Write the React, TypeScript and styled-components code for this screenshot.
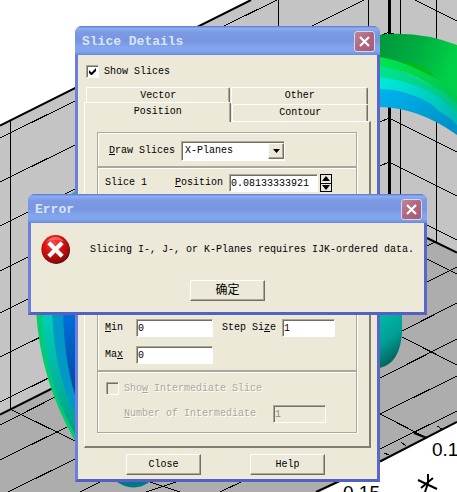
import React from "react";
import styled, { createGlobalStyle, css } from "styled-components";

const face = "#ece9d8";
const shade = "#aca899";
const dark = "#716f64";

const GlobalStyle = createGlobalStyle`
  * { box-sizing: border-box; }
  body {
    margin: 0;
    overflow: hidden;
    background: #fff;
    color: #000;
    font: 10px/12px "Liberation Mono", "Noto Sans CJK SC", monospace;
  }
  button, input, select { font: inherit; color: inherit; margin: 0; border-radius: 0; }
`;

const Desktop = styled.main`
  position: relative;
  min-height: 100vh;
`;

const Plot = styled.svg`
  display: block;
  width: 100vw;
  height: 100vh;
`;

const Window = styled.section<{ $top: number; $left: number; $right: number }>`
  position: absolute;
  top: ${(p) => p.$top}px;
  left: ${(p) => p.$left}px;
  right: ${(p) => p.$right}px;
  border: 3px solid #6d7fdc;
  border-top: 0;
  border-right-color: #5a66c8;
  border-bottom-color: #5560c4;
  border-radius: 7px 7px 0 0;
  background: #7b97e0;
`;

const TitleBar = styled.header`
  display: flex;
  align-items: center;
  justify-content: space-between;
  height: 29px;
  margin: 0 -3px;
  padding: 2px 5px 0 7px;
  border-radius: 7px 7px 0 0;
  background: linear-gradient(#5c78cc 0, #8eacf0 8%, #7c9ae4 22%, #7896e0 50%, #82a6ee 75%, #80a4ec 88%, #6c88d8 100%);
`;

const Title = styled.h1`
  margin: 0;
  color: #d8e4f8;
  font-size: 13px;
  line-height: 16px;
  font-weight: bold;
`;

const CloseBox = styled.button`
  display: grid;
  place-items: center;
  width: 21px;
  height: 21px;
  padding: 0;
  border: 1px solid #d5d4f2;
  border-radius: 3px;
  background: linear-gradient(135deg, #c08498, #b0667a 50%, #a45c78);
`;

const bevel = css`
  border: 1px solid;
  border-color: #fff ${dark} ${dark} #fff;
  box-shadow: inset -1px -1px ${shade};
  background: ${face};
`;

const sunken = css`
  border: 1px solid;
  border-color: ${shade} #fff #fff ${shade};
  box-shadow: inset 1px 1px ${dark};
`;

const PushButton = styled.button<{ $large?: boolean }>`
  ${bevel}
  width: 75px;
  height: 21px;
  padding: 0;
  font-size: ${(p) => (p.$large ? 12 : 10)}px;
  line-height: 16px;
`;

const SliceBody = styled.div`
  padding: 10px 6px 4px;
  background: ${face};
`;

const CheckLabel = styled.label<{ $disabled?: boolean }>`
  display: flex;
  align-items: center;
  gap: 5px;
  height: 13px;
  ${(p) => p.$disabled && css`color: ${shade}; text-shadow: 1px 1px #fff;`}
`;

const TopCheck = styled.div`
  padding-left: 2px;
  margin-bottom: 9px;
`;

const CheckWrap = styled.span`
  display: grid;
  width: 13px;
  height: 13px;
  > * { grid-area: 1 / 1; }
  > svg { place-self: center; pointer-events: none; }
`;

const Check = styled.input`
  ${sunken}
  appearance: none;
  width: 13px;
  height: 13px;
  background: #fff;
  &:disabled { background: ${face}; }
`;

const TabRow = styled.div<{ $front?: boolean }>`
  display: flex;
  align-items: flex-end;
  height: 17px;
  gap: 1px;
  padding: 0 3px 0 ${(p) => (p.$front ? 0 : 2)}px;
`;

const Tab = styled.button<{ $active?: boolean; $first?: boolean }>`
  flex: ${(p) => (p.$active ? "148 1 0" : p.$first ? "144 1 0" : "136 1 0")};
  height: ${(p) => (p.$active ? 20 : 17)}px;
  margin-bottom: ${(p) => (p.$active ? -1 : 0)}px;
  padding: 0 0 ${(p) => (p.$active ? 2 : 0)}px;
  position: relative;
  border: 1px solid;
  border-color: #fff ${dark} transparent #fff;
  border-bottom: 0;
  border-radius: 2px 2px 0 0;
  box-shadow: inset -1px 0 ${shade};
  background: ${face};
  line-height: 14px;
`;

const TabPanel = styled.div`
  padding: 10px 12px 13px;
  border: solid;
  border-width: 1px 2px 2px 1px;
  border-color: #fff #817e70 #817e70 #fff;
`;

const Frame = styled.div`
  border: 1px solid ${shade};
  box-shadow: 1px 1px #fff, inset 1px 1px #fff;
`;

const Section = styled.div<{ $pad: string }>`
  padding: ${(p) => p.$pad};
`;

const Divider = styled.hr`
  height: 3px;
  margin: 0;
  border: 0;
  border-top: 2px solid ${shade};
  background: #fff;
`;

const Row = styled.div<{ $before?: number; $indent?: number; $disabled?: boolean }>`
  display: flex;
  align-items: center;
  height: 18px;
  margin-top: ${(p) => p.$before ?? 0}px;
  padding-left: ${(p) => p.$indent ?? 0}px;
  white-space: nowrap;
  ${(p) => p.$disabled && css`color: ${shade}; text-shadow: 1px 1px #fff;`}
`;

const Caption = styled.label<{ $width: number }>`
  flex: 0 0 ${(p) => p.$width}px;
`;

const Field = styled.input<{ $width: number; $after?: number }>`
  ${sunken}
  width: ${(p) => p.$width}px;
  height: 18px;
  margin-right: ${(p) => p.$after ?? 0}px;
  padding: 0 1px;
  background: #fff;
  &:disabled { background: ${face}; color: #8f8c7e; }
`;

const SelectWrap = styled.span`
  ${sunken}
  display: grid;
  width: 104px;
  height: 20px;
  background: #fff;
  > * { grid-area: 1 / 1; }
`;

const Select = styled.select`
  appearance: none;
  width: 100%;
  padding: 0 18px 0 3px;
  border: 0;
  background: transparent;
`;

const SelectArrow = styled.span`
  ${bevel}
  display: grid;
  place-items: center;
  place-self: center end;
  width: 16px;
  height: 16px;
  pointer-events: none;
`;

const Spinner = styled.span`
  display: grid;
  width: 12px;
  height: 18px;
  border: 1px solid #000;
`;

const SpinButton = styled.button`
  display: grid;
  place-items: center;
  padding: 0;
  border: 0;
  background: ${face};
  & + & { border-top: 1px solid #000; }
`;

const Footer = styled.footer`
  display: flex;
  gap: 49px;
  padding: 6px 0 0 42px;
`;

const ErrorBody = styled.div`
  padding: 10px 10px 11px;
  background: ${face};
`;

const MessageRow = styled.div`
  display: flex;
  align-items: center;
  gap: 20px;
  height: 33px;
  margin-bottom: 14px;
`;

const Message = styled.p`
  margin: 0;
  white-space: nowrap;
`;

const Centered = styled.div`
  display: flex;
  justify-content: center;
`;

const TitleClose = ({ name }: { name: string }) => (
  <CloseBox aria-label={name}>
    <svg width="11" height="11" viewBox="0 0 11 11">
      <path d="M1 1L10 10M10 1L1 10" stroke="#fff" strokeWidth="2.2" />
    </svg>
  </CloseBox>
);

const ErrorIcon = () => (
  <svg width="32" height="33" viewBox="0 0 32 33" aria-hidden="true">
    <defs>
      <radialGradient id="ball" cx="42%" cy="30%" r="70%">
        <stop offset="0" stopColor="#f4504a" />
        <stop offset="0.45" stopColor="#dc1414" />
        <stop offset="1" stopColor="#860808" />
      </radialGradient>
    </defs>
    <circle cx="16.8" cy="17.2" r="15.2" fill="#3a1010" />
    <circle cx="16" cy="16.2" r="15.6" fill="url(#ball)" />
    <path d="M6 8Q16 -3 26 8Q16 4 6 8Z" fill="#ff9a90" opacity="0.5" />
    <path d="M8.6 9L23.4 24M23.4 9L8.6 24" stroke="#fff" strokeWidth="4.6" />
  </svg>
);

const Scene = () => (
  <Plot viewBox="0 0 457 492" preserveAspectRatio="xMinYMin slice" aria-hidden="true">
    <defs>
      <linearGradient id="green" x1="0" y1="0" x2="1" y2="0.3">
        <stop offset="0" stopColor="#00963a" />
        <stop offset="0.5" stopColor="#00ac40" />
        <stop offset="1" stopColor="#00d048" />
      </linearGradient>
      <linearGradient id="lime" x1="0" y1="0" x2="1" y2="0.6">
        <stop offset="0" stopColor="#00e64c" />
        <stop offset="1" stopColor="#00c850" />
      </linearGradient>
      <linearGradient id="mint" x1="0" y1="0" x2="1" y2="0.6">
        <stop offset="0" stopColor="#00e68c" />
        <stop offset="1" stopColor="#00c488" />
      </linearGradient>
      <linearGradient id="cyan" x1="0" y1="0" x2="1" y2="0.7">
        <stop offset="0" stopColor="#00ecdc" />
        <stop offset="1" stopColor="#00bcb4" />
      </linearGradient>
      <linearGradient id="sky" x1="0" y1="0" x2="1" y2="0.7">
        <stop offset="0" stopColor="#00b4ee" />
        <stop offset="1" stopColor="#0092c8" />
      </linearGradient>
      <linearGradient id="teal" x1="0" y1="0" x2="0.3" y2="1">
        <stop offset="0" stopColor="#00bcae" />
        <stop offset="0.55" stopColor="#00a096" />
        <stop offset="1" stopColor="#006058" />
      </linearGradient>
      <linearGradient id="outer" x1="0" y1="0" x2="0" y2="1">
        <stop offset="0" stopColor="#00d0bc" />
        <stop offset="1" stopColor="#00a088" />
      </linearGradient>
      <linearGradient id="blue" x1="0" y1="0" x2="0" y2="1">
        <stop offset="0" stopColor="#0070dc" />
        <stop offset="1" stopColor="#0048a4" />
      </linearGradient>
    </defs>
    <path d="M0 125L251 0H457V252L389 220L0 414Z" fill="#c4c4c4" />
    <path d="M0 414L389 220L457 252V422L320 492H0Z" fill="#adadad" />
    <g stroke="#000" strokeWidth="1" fill="none" shapeRendering="crispEdges">
      <path d="M0 138L75 101M0 182L75 145M0 226L75 189M0 271L75 234M0 313L75 276M0 357L75 320M0 402L75 365" />
      <path d="M10.5 120V409M278.5 0V30M368.5 0V30M400.5 0V220M436.5 0V242" />
      <path d="M224 26L277 0M312 26L364 0M415 0L457 21M380 36L389 32L400 37M380 122L389 118L457 152M380 166L389 162L457 196" />
      <path d="M427 225L457 240M427 246L435 242M427 259L457 274M427 282L457 267M427 318L457 303" />
      <path d="M0 425L75 387M0 460L75 423M8 492L75 459M80 492L100 482M10 409L75 441M150 482L180 492M146 492L176 482M220 492L243 481" />
      <path d="M402 331L457 303M402 337L457 365M380 378L457 339M380 414L457 376M380 414L425 437M380 449L457 411M384 453L389 455M401 442L406 446M437 426L442 429" />
    </g>
    <g stroke="#000" strokeWidth="2" fill="none">
      <path d="M0 125.5L251 0M0 414.5L75 377M427 238L457 252.5M380 461.5L457 422M316 492L344 479M414 433L427 438" />
      <path d="M389.5 0V220" strokeWidth="3" />
    </g>
    <path d="M378 35Q418 30 457 45V97Q418 66 378 57Z" fill="url(#green)" />
    <path d="M378 57Q400 59 437 79Q450 87 457 96V105Q418 70 378 67Z" fill="url(#lime)" />
    <path d="M378 66Q400 68 429 84Q447 93 457 104V115Q418 80 378 78Z" fill="url(#mint)" />
    <path d="M378 77Q406 80 428 91Q447 102 457 114V127Q418 96 378 90Z" fill="url(#cyan)" />
    <path d="M378 89Q406 89 431 104L440 112Q450 117 457 125V135Q418 107 378 107Z" fill="url(#sky)" />
    <path d="M400 60Q422 65 437 78Q420 71 400 60Z" fill="#00c000" />
    <path d="M71 194L75 191V194Z" fill="#00cc90" />
    <path d="M36 310Q40 380 75 441V310Z" fill="#00cc70" />
    <path d="M42 310Q44 380 75 434V310Z" fill="url(#outer)" />
    <path d="M52 310Q54 372 75 415V310Z" fill="#0098c4" />
    <path d="M63 310Q64 360 75 395V310Z" fill="url(#blue)" />
    <path d="M380 310H402V333Q400 363 380 368Z" fill="url(#teal)" />
    <path d="M114 480H152Q134 495 114 480Z" fill="#007888" />
    <g fontFamily="Liberation Sans, Arial, sans-serif" fontSize="19">
      <text x="432" y="456">0.1</text>
      <text x="343" y="499">0.15</text>
    </g>
    <path d="M418 480L437 489M428 474V483L425 492M433 478L421 488" stroke="#000" strokeWidth="2" fill="none" />
  </Plot>
);

const Triangle = ({ up, wide }: { up?: boolean; wide?: boolean }) => (
  <svg width={wide ? 7 : 8} height={wide ? 4 : 5} viewBox="0 0 8 5" preserveAspectRatio="none">
    <path d={up ? "M0 5L4 0L8 5Z" : "M0 0H8L4 5Z"} />
  </svg>
);

export default function App() {
  return (
    <Desktop>
      <GlobalStyle />
      <Scene />
      <Window $top={26} $left={75} $right={77} role="dialog" aria-labelledby="slice-title">
        <TitleBar>
          <Title id="slice-title">Slice Details</Title>
          <TitleClose name="Close Slice Details" />
        </TitleBar>
        <SliceBody>
          <TopCheck>
            <CheckLabel>
              <CheckWrap>
                <Check type="checkbox" defaultChecked />
                <svg width="7" height="7" viewBox="0 0 7 7">
                  <path d="M0 2V5L2 7H3L7 3V0L2.5 4.5Z" />
                </svg>
              </CheckWrap>
              Show Slices
            </CheckLabel>
          </TopCheck>
          <div role="tablist" aria-label="Slice settings">
            <TabRow>
              <Tab role="tab" $first>Vector</Tab>
              <Tab role="tab">Other</Tab>
            </TabRow>
            <TabRow $front>
              <Tab role="tab" aria-selected="true" $active>Position</Tab>
              <Tab role="tab">Contour</Tab>
            </TabRow>
          </div>
          <TabPanel role="tabpanel">
            <Frame>
              <Section $pad="9px 11px 6px">
                <Row>
                  <Caption htmlFor="draw" $width={72}><u>D</u>raw Slices</Caption>
                  <SelectWrap>
                    <Select id="draw" defaultValue="X-Planes">
                      <option>X-Planes</option>
                    </Select>
                    <SelectArrow><Triangle wide /></SelectArrow>
                  </SelectWrap>
                </Row>
              </Section>
              <Divider />
              <Section $pad="5px 7px 6px">
                <Row>
                  <Caption as="span" $width={70}>Slice 1</Caption>
                  <Caption htmlFor="position" $width={54}><u>P</u>osition</Caption>
                  <Field id="position" defaultValue="0.08133333921" $width={89} $after={2} />
                  <Spinner>
                    <SpinButton aria-label="Increase position"><Triangle up /></SpinButton>
                    <SpinButton aria-label="Decrease position"><Triangle /></SpinButton>
                  </Spinner>
                </Row>
                <Row $before={127}>
                  <Caption htmlFor="min" $width={31}><u>M</u>in</Caption>
                  <Field id="min" defaultValue="0" $width={77} $after={9} />
                  <Caption htmlFor="step" $width={60}>Step Si<u>z</u>e</Caption>
                  <Field id="step" defaultValue="1" $width={53} />
                </Row>
                <Row $before={9}>
                  <Caption htmlFor="max" $width={31}>Ma<u>x</u></Caption>
                  <Field id="max" defaultValue="0" $width={77} />
                </Row>
              </Section>
              <Divider />
              <Section $pad="9px 8px 9px">
                <CheckLabel $disabled>
                  <Check type="checkbox" disabled />
                  <span>Sho<u>w</u> Intermediate Slice</span>
                </CheckLabel>
                <Row $before={10} $indent={18} $disabled>
                  <Caption htmlFor="count" $width={149}><u>N</u>umber of Intermediate</Caption>
                  <Field id="count" defaultValue="1" disabled $width={53} />
                </Row>
              </Section>
            </Frame>
          </TabPanel>
          <Footer>
            <PushButton>Close</PushButton>
            <PushButton>Help</PushButton>
          </Footer>
        </SliceBody>
      </Window>
      <Window $top={194} $left={28} $right={30} role="alertdialog" aria-labelledby="error-title">
        <TitleBar>
          <Title id="error-title">Error</Title>
          <TitleClose name="Close Error" />
        </TitleBar>
        <ErrorBody>
          <MessageRow>
            <ErrorIcon />
            <Message>Slicing I-, J-, or K-Planes requires IJK-ordered data.</Message>
          </MessageRow>
          <Centered>
            <PushButton $large>确定</PushButton>
          </Centered>
        </ErrorBody>
      </Window>
    </Desktop>
  );
}
